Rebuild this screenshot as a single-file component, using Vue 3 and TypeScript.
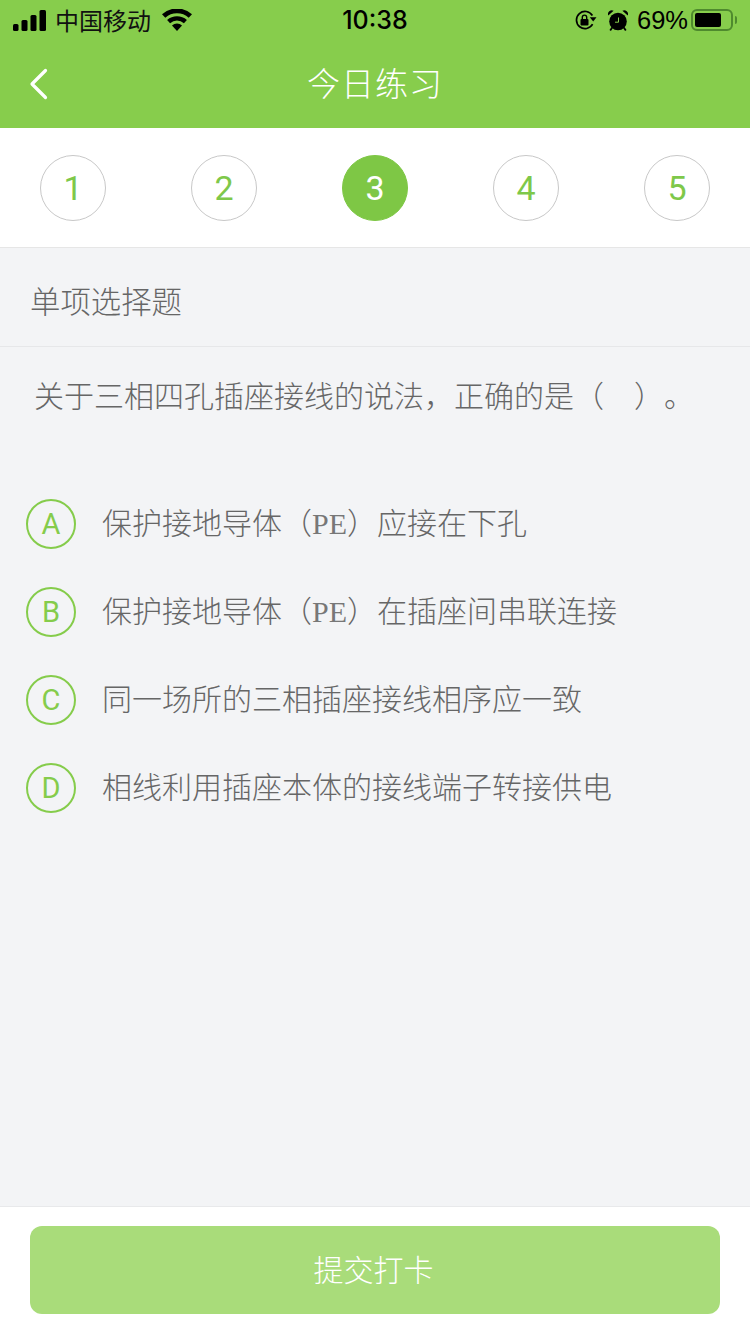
<script setup lang="ts">
const steps = [1, 2, 3, 4, 5]
const active = 3
const options = [
  { key: 'A', parts: ['保护接地导体（', 'PE', '）应接在下孔'] },
  { key: 'B', parts: ['保护接地导体（', 'PE', '）在插座间串联连接'] },
  { key: 'C', parts: ['同一场所的三相插座接线相序应一致'] },
  { key: 'D', parts: ['相线利用插座本体的接线端子转接供电'] },
]
</script>

<template>
  <div class="page">
    <header class="head">
      <div class="status">
        <div class="status-side">
          <svg class="signal" width="33" height="21" viewBox="0 0 33 21">
            <rect x="0" y="14" width="5.500" height="7" rx="1.500" />
            <rect x="8.500" y="10" width="6" height="11" rx="1.500" />
            <rect x="17.500" y="5" width="6" height="16" rx="1.500" />
            <rect x="26.500" y="0" width="6.500" height="21" rx="1.500" />
          </svg>
          <span class="carrier">中国移动</span>
          <svg class="wifi" width="30" height="22" viewBox="0 0 30 22">
            <path d="M15 22l-5-5.600a7.500 7.500 0 0 1 10 0z" />
            <path d="M8.100 14.200l-3-3.300a15 15 0 0 1 19.800 0l-3 3.300a10.500 10.500 0 0 0-13.800 0z" />
            <path d="M3.300 8.800L0 5.200a22.500 22.500 0 0 1 30 0l-3.300 3.600a17.600 17.600 0 0 0-23.400 0z" />
          </svg>
        </div>
        <span class="time">10:38</span>
        <div class="status-side right">
          <svg class="lock" width="22" height="20" viewBox="0 0 22 20" fill="none">
            <path d="M17.600 14.200A8.600 8.600 0 1 1 17.400 5.500" stroke="#000" stroke-width="1.700" />
            <path d="M14.800 7.200L21.500 7.200 18.200 11.500z" fill="#000" />
            <rect x="5.500" y="9" width="8" height="6.500" rx="1" fill="#000" />
            <path d="M7.300 9V7.300a2.200 2.200 0 0 1 4.400 0V9" stroke="#000" stroke-width="1.400" />
          </svg>
          <svg class="alarm" width="20" height="21" viewBox="0 0 20 21">
            <circle cx="10" cy="11.500" r="8.800" />
            <path d="M0.300 5.500a3.800 3.800 0 0 1 5.300-4.800zM19.700 5.500a3.800 3.800 0 0 0-5.300-4.800z" />
            <path d="M4.200 17.500l-2 3M15.800 17.500l2 3" stroke="#000" stroke-width="1.800" />
            <path d="M10.500 7.500v4.700H7" stroke="#87cd4c" stroke-width="1" fill="none" />
          </svg>
          <span class="percent">69%</span>
          <div class="battery"><div class="battery-fill"></div></div>
          <div class="battery-cap"></div>
        </div>
      </div>
      <div class="nav">
        <svg class="back" width="20" height="32" viewBox="0 0 20 32" fill="none">
          <path d="M16.500 2.500L3 16l13.500 13.500" stroke="#fff" stroke-width="3.200" stroke-linecap="round" stroke-linejoin="round" />
        </svg>
        <h1 class="title">今日练习</h1>
      </div>
    </header>

    <nav class="steps">
      <div v-for="s in steps" :key="s" class="step" :class="{ on: s === active }">{{ s }}</div>
    </nav>

    <main class="body">
      <div class="kind">单项选择题</div>
      <p class="question">关于三相四孔插座接线的说法，正确的是（　）。</p>
      <ul class="options">
        <li v-for="o in options" :key="o.key" class="option">
          <span class="letter">{{ o.key }}</span>
          <span class="text">
            <template v-for="(p, i) in o.parts" :key="i">
              <span v-if="p === 'PE'" class="latin">{{ p }}</span>
              <template v-else>{{ p }}</template>
            </template>
          </span>
        </li>
      </ul>
    </main>

    <footer class="foot">
      <button class="submit" type="button">提交打卡</button>
    </footer>
  </div>
</template>

<style scoped>
.page {
  width: 750px;
  height: 1334px;
  display: flex;
  flex-direction: column;
  background: #f3f4f6;
  font-family: "Noto Sans CJK SC", "Liberation Sans", sans-serif;
  text-spacing-trim: space-all;
  overflow: hidden;
}
.head {
  height: 128px;
  background: #87cd4c;
  flex: none;
}
.status {
  height: 40px;
  padding: 0 13px 0 13px;
  display: flex;
  align-items: center;
  justify-content: space-between;
  position: relative;
  color: #000;
}
.status-side {
  display: flex;
  align-items: center;
}
.signal, .wifi, .alarm { fill: #000; }
.signal { margin-right: 9px; }
.carrier { font-size: 24px; line-height: 40px; color: #111; margin-right: 11px; }
.time {
  position: absolute;
  left: 0;
  right: 0;
  text-align: center;
  font-family: "Inter", "Liberation Sans", sans-serif;
  font-size: 25px;
  font-weight: 500;
}
.alarm { margin-left: 11px; }
.percent {
  font-family: "Liberation Sans", sans-serif;
  font-size: 25.500px;
  margin-left: 9px;
  margin-right: 3px;
}
.battery {
  width: 42px;
  height: 22px;
  box-sizing: border-box;
  border: 2px solid #4f8a2e;
  border-radius: 6px;
  padding: 2px;
}
.battery-fill {
  width: 26px;
  height: 14px;
  background: #000;
  border-radius: 2px;
}
.battery-cap {
  width: 2px;
  height: 8px;
  margin-left: 2px;
  background: #4f8a2e;
  border-radius: 0 2px 2px 0;
}
.nav {
  height: 88px;
  position: relative;
  display: flex;
  align-items: center;
  justify-content: center;
  padding-bottom: 4px;
  box-sizing: border-box;
}
.back {
  position: absolute;
  left: 29px;
  top: 28px;
}
.title {
  margin: 0;
  font-size: 33px;
  font-weight: 300;
  color: #fff;
  letter-spacing: 1px;
}
.steps {
  height: 120px;
  box-sizing: border-box;
  flex: none;
  background: #fff;
  padding: 27px 40px 0;
  display: flex;
  justify-content: space-between;
  align-items: flex-start;
  border-bottom: 1px solid #e6e6e6;
}
.step {
  width: 66px;
  height: 66px;
  box-sizing: border-box;
  border: 1px solid #c8c8c8;
  border-radius: 50%;
  display: flex;
  align-items: center;
  justify-content: center;
  font-family: "Roboto", "Liberation Sans", sans-serif;
  font-weight: 400;
  font-size: 34px;
  color: #7ec84a;
}
.step.on {
  background: #7ec745;
  border-color: #7ec745;
  color: #fff;
}
.body {
  flex: 1;
  min-height: 0;
}
.kind {
  height: 99px;
  box-sizing: border-box;
  padding: 5px 0 0 30px;
  display: flex;
  align-items: center;
  border-bottom: 1px solid #e6e7e9;
  font-size: 30.400px;
  font-weight: 300;
  color: #666;
}
.question {
  margin: 0;
  padding: 25px 0 0 34px;
  font-size: 30px;
  line-height: 44px;
  font-weight: 300;
  color: #666;
  white-space: pre;
}
.options {
  list-style: none;
  margin: 0;
  padding: 64px 0 0 26px;
}
.option {
  height: 88px;
  display: flex;
  align-items: center;
}
.letter {
  width: 50px;
  height: 50px;
  box-sizing: border-box;
  border: 2px solid #85cc4b;
  border-radius: 50%;
  display: flex;
  align-items: center;
  justify-content: center;
  font-family: "Roboto", "Liberation Sans", sans-serif;
  font-weight: 400;
  font-size: 29px;
  color: #85cc4b;
  flex: none;
}
.text {
  margin-left: 26px;
  padding-bottom: 6px;
  font-size: 30px;
  font-weight: 300;
  color: #666;
  white-space: nowrap;
}
.latin {
  font-family: "Liberation Serif", serif;
  color: #777;
}
.foot {
  flex: none;
  height: 128px;
  box-sizing: border-box;
  background: #fff;
  border-top: 1px solid #e8e9eb;
  padding: 19px 30px 0;
}
.submit {
  display: block;
  width: 100%;
  height: 88px;
  padding: 0 3px 4px 0;
  border: 0;
  border-radius: 12px;
  background: #a9dc7a;
  color: #fff;
  font-family: inherit;
  font-size: 30px;
  font-weight: 300;
}
</style>
